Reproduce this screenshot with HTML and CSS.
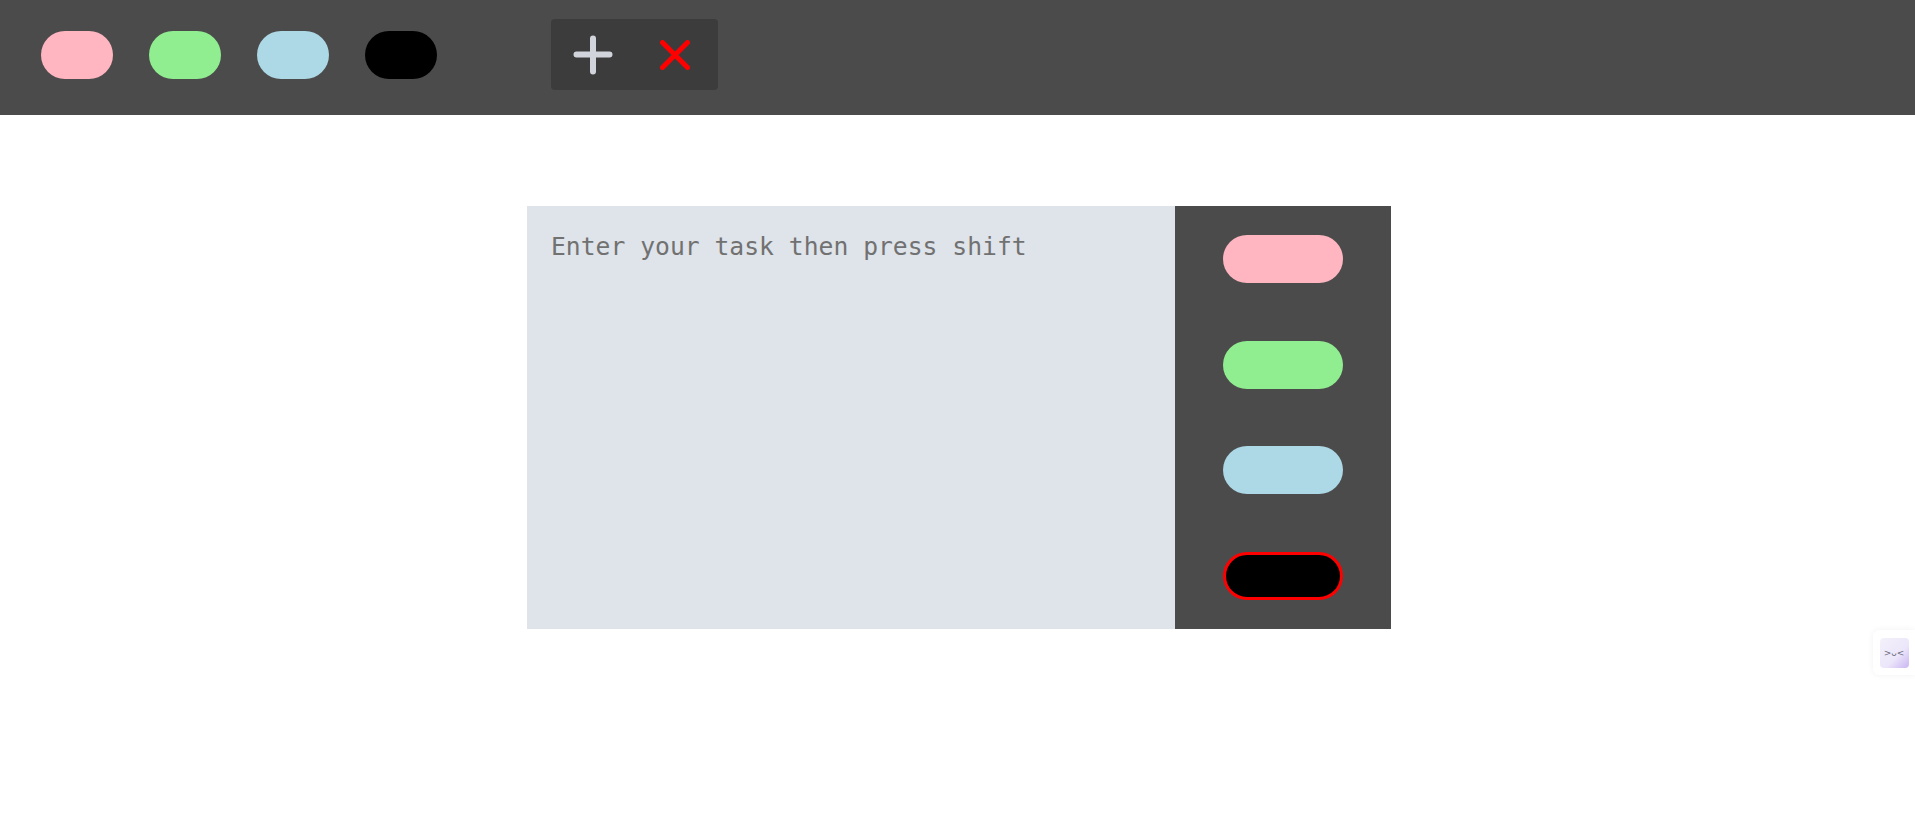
FILE: index.html
```html
<!DOCTYPE html>
<html lang="en">
<head>
<meta charset="utf-8">
<title>Tasks</title>
<link rel="stylesheet" href="styles.css">
</head>
<body>
<header class="topbar">
  <div class="dots">
    <span class="dot dot-pink"></span>
    <span class="dot dot-green"></span>
    <span class="dot dot-blue"></span>
    <span class="dot dot-black"></span>
  </div>
  <div class="actions">
    <button class="action" aria-label="Add">
      <svg width="40" height="40" viewBox="0 0 40 40"><path d="M20 3.5V36.5M3.5 19.5H36.5" stroke="#d1d5db" stroke-width="6" stroke-linecap="round" fill="none"/></svg>
    </button>
    <button class="action" aria-label="Delete">
      <svg width="32" height="30" viewBox="0 0 32 30"><path d="M3.5 2.5L28.5 27.5M28.5 2.5L3.5 27.5" stroke="#ff0000" stroke-width="5" stroke-linecap="round" fill="none"/></svg>
    </button>
  </div>
</header>
<main class="content">
  <section class="card">
    <textarea class="task-input" placeholder="Enter your task then press shift"></textarea>
    <aside class="palette">
      <span class="pill dot-pink"></span>
      <span class="pill dot-green"></span>
      <span class="pill dot-blue"></span>
      <span class="pill dot-black pill-selected"></span>
    </aside>
  </section>
</main>
<div class="widget"><span class="widget-face">&gt;ᴗ&lt;</span></div>
</body>
</html>
```
FILE: styles.css
```css
html, body {
  margin: 0;
  padding: 0;
  background: #ffffff;
  font-family: "Liberation Sans", Arial, sans-serif;
}

.topbar {
  box-sizing: border-box;
  height: 115px;
  background: #4b4b4b;
  display: flex;
  align-items: center;
  padding: 19px 0 25px 41px;
}

.dots {
  display: flex;
  gap: 36px;
}

.dot {
  display: block;
  width: 72px;
  height: 48px;
  border-radius: 24px;
}

.dot-pink { background: #ffb6c1; }
.dot-green { background: #90ee90; }
.dot-blue { background: #add8e6; }
.dot-black { background: #000000; }

.actions {
  margin-left: 114px;
  width: 167px;
  height: 71px;
  background: #3c3c3c;
  border-radius: 4px;
  display: flex;
  align-items: center;
  padding-left: 22px;
  box-sizing: border-box;
  gap: 46px;
}

.action {
  background: none;
  border: none;
  padding: 0;
  margin: 0;
  display: flex;
  align-items: center;
  justify-content: center;
  cursor: pointer;
}

.content {
  display: flex;
  justify-content: center;
  padding-top: 91px;
  padding-left: 3px;
}

.card {
  display: flex;
  width: 864px;
  height: 423px;
}

.task-input {
  box-sizing: border-box;
  width: 648px;
  height: 100%;
  margin: 0;
  border: none;
  outline: none;
  resize: none;
  background: #dfe3ea;
  padding: 25px 24px 24px;
  font-family: "DejaVu Sans Mono", "Liberation Mono", monospace;
  font-size: 24.7px;
  line-height: 32px;
  color: #333333;
}

.task-input::placeholder {
  color: #717171;
  opacity: 1;
}

.palette {
  width: 216px;
  background: #4b4b4b;
  display: flex;
  flex-direction: column;
  align-items: center;
  justify-content: space-around;
}

.pill {
  display: block;
  box-sizing: border-box;
  width: 120px;
  height: 48px;
  border-radius: 24px;
}

.pill-selected {
  border: 3px solid #ff0000;
}

.widget {
  position: absolute;
  top: 630px;
  right: 0;
  width: 42px;
  height: 45px;
  background: #ffffff;
  border-radius: 6px 0 0 6px;
  box-shadow: 0 0 6px rgba(0, 0, 0, 0.06);
  display: flex;
  align-items: center;
  justify-content: center;
}

.widget-face {
  display: flex;
  align-items: center;
  justify-content: center;
  width: 29px;
  height: 30px;
  border-radius: 4px;
  background: linear-gradient(135deg, #f3f1fa 0%, #ece6fa 60%, #c9b5f2 100%);
  font-family: "DejaVu Sans", sans-serif;
  font-size: 9px;
  color: #6b6b7a;
  letter-spacing: 0px;
}
```
